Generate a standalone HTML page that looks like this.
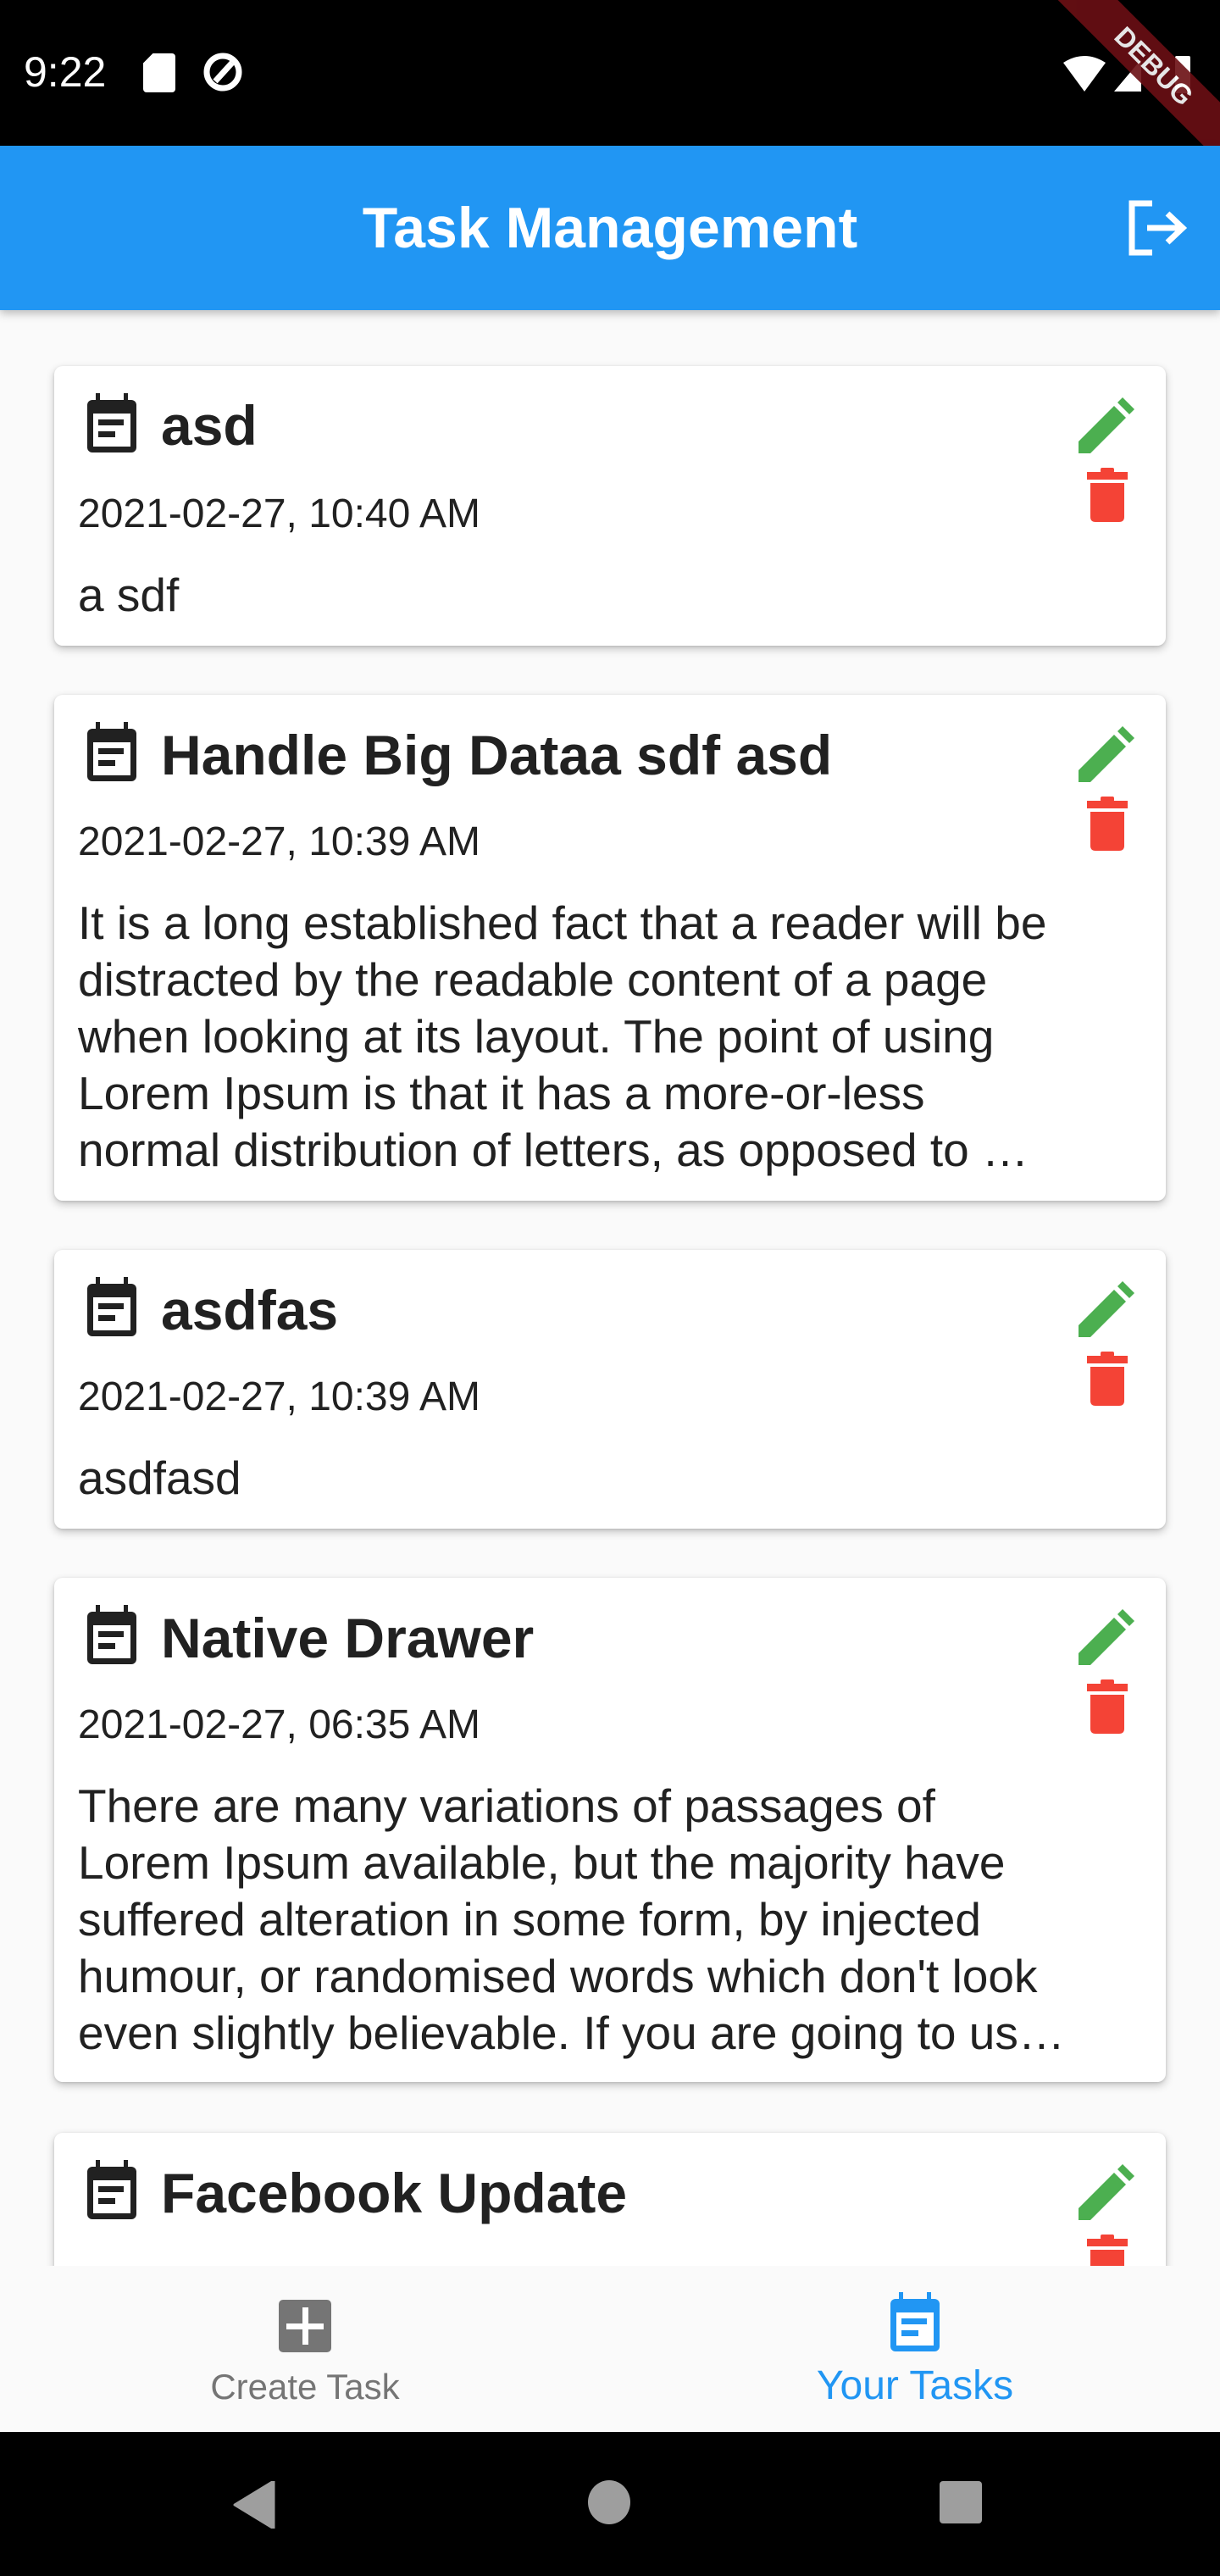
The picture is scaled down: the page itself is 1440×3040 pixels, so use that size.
<!DOCTYPE html>
<html><head><meta charset="utf-8"><style>
*{margin:0;padding:0;box-sizing:border-box}
body{width:1440px;height:3040px;overflow:hidden;background:#fafafa;font-family:"Liberation Sans",Roboto,sans-serif;position:relative;color:#212121}
.status{position:absolute;left:0;top:0;width:1440px;height:172px;background:#000;color:#fff;overflow:hidden}
.appbar{position:absolute;left:0;top:172px;width:1440px;height:194px;background:#2196f3;box-shadow:0 4px 10px rgba(0,0,0,.25);z-index:2}
.appbar h1{position:absolute;left:0;width:1440px;text-align:center;top:52px;font-size:68px;font-weight:bold;color:#fff;line-height:90px}
.card{position:absolute;left:64px;width:1312px;background:#fff;border-radius:10px;box-shadow:0 4px 10px rgba(0,0,0,.22),0 1px 3px rgba(0,0,0,.12)}
.card .ic{position:absolute;left:37px;width:62px;height:70px}
.card .t{position:absolute;left:126px;font-size:66px;font-weight:bold;line-height:80px;white-space:nowrap}
.card .d{position:absolute;left:28px;font-size:48px;line-height:60px;white-space:nowrap}
.card .b{position:absolute;left:28px;font-size:55px;line-height:67px;white-space:nowrap}
.card .ed{position:absolute;left:1209px;width:66px;height:66px}
.card .tr{position:absolute;left:1219px;width:48px;height:64px}
.nav{position:absolute;left:0;top:2674px;width:1440px;height:196px;background:#fafafa;z-index:3}
.sys{position:absolute;left:0;top:2870px;width:1440px;height:170px;background:#000;z-index:3}
</style></head><body>
<div class="status">
 <div style="position:absolute;left:28px;top:54px;font-size:50px;line-height:62px">9:22</div>
 <div style="position:absolute;left:169px;top:63px;width:38px;height:46px;background:#fff;border-radius:4px;clip-path:polygon(30% 0,100% 0,100% 100%,0 100%,0 25%)"></div>
 <svg style="position:absolute;left:238px;top:60px" width="50" height="52" viewBox="0 0 50 52"><circle cx="25" cy="25" r="19" fill="none" stroke="#fff" stroke-width="7"/><path d="M16 36 L36 14" stroke="#fff" stroke-width="7"/></svg>
 <svg style="position:absolute;left:1255px;top:62px" width="160" height="50" viewBox="0 0 160 50"><path d="M0 12 Q25 -4 50 12 L25 46Z" fill="#fff"/><path d="M60 46 L92 8 L92 46Z" fill="#fff"/><rect x="132" y="4" width="18" height="44" rx="2" fill="#fff"/></svg>
 <div style="position:absolute;left:1202px;top:53px;width:320px;height:50px;background:#6b0f14;transform:rotate(45deg);color:#fff;font-weight:bold;font-size:32px;text-align:center;line-height:50px;opacity:.9">DEBUG</div>
</div>
<div class="appbar"><h1>Task Management</h1>
 <svg style="position:absolute;left:1330px;top:64px" width="72" height="66" viewBox="0 0 72 66"><path d="M30 4 H6 V62 H30" fill="none" stroke="#fff" stroke-width="7"/><path d="M24 33 H64 M48 16 L66 33 L48 50" fill="none" stroke="#fff" stroke-width="7"/></svg>
</div>

<svg width="0" height="0" style="position:absolute"><defs>
<symbol id="cal" viewBox="0 0 62 70"><rect x="12" y="0" width="5" height="12" fill="currentColor"/><rect x="45" y="0" width="5" height="12" fill="currentColor"/><rect x="2" y="8" width="58" height="62" rx="6" fill="currentColor"/><rect x="9" y="24" width="44" height="39" fill="#fff"/><rect x="15" y="31" width="30" height="7" fill="currentColor"/><rect x="15" y="45" width="20" height="7" fill="currentColor"/></symbol>
<symbol id="pen" viewBox="0 0 66 66"><path d="M0 66 V52 L42 10 L56 24 L14 66Z" fill="#4caf50"/><path d="M46 6 L52 0 L66 14 L60 20Z" fill="#4caf50"/></symbol>
<symbol id="bin" viewBox="0 0 48 64"><rect x="16" y="0" width="16" height="6" rx="2" fill="#f44336"/><rect x="0" y="5" width="48" height="9" fill="#f44336"/><path d="M4 18 H44 V58 Q44 64 38 64 H10 Q4 64 4 58Z" fill="#f44336"/></symbol>
</defs></svg>

<div class="card" style="top:432px;height:330px">
 <svg class="ic" style="top:32px;color:#212121"><use href="#cal"/></svg>
 <div class="t" style="top:30px">asd</div>
 <div class="d" style="top:145px">2021-02-27, 10:40 AM</div>
 <div class="b" style="top:237px">a sdf</div>
 <svg class="ed" style="top:37px"><use href="#pen"/></svg>
 <svg class="tr" style="top:120px"><use href="#bin"/></svg>
</div>

<div class="card" style="top:820px;height:597px">
 <svg class="ic" style="top:32px;color:#212121"><use href="#cal"/></svg>
 <div class="t" style="top:31px">Handle Big Dataa sdf asd</div>
 <div class="d" style="top:144px">2021-02-27, 10:39 AM</div>
 <div class="b" style="top:236px">It is a long established fact that a reader will be<br>distracted by the readable content of a page<br>when looking at its layout. The point of using<br>Lorem Ipsum is that it has a more-or-less<br>normal distribution of letters, as opposed to …</div>
 <svg class="ed" style="top:37px"><use href="#pen"/></svg>
 <svg class="tr" style="top:120px"><use href="#bin"/></svg>
</div>

<div class="card" style="top:1475px;height:329px">
 <svg class="ic" style="top:32px;color:#212121"><use href="#cal"/></svg>
 <div class="t" style="top:31px">asdfas</div>
 <div class="d" style="top:144px">2021-02-27, 10:39 AM</div>
 <div class="b" style="top:236px">asdfasd</div>
 <svg class="ed" style="top:37px"><use href="#pen"/></svg>
 <svg class="tr" style="top:120px"><use href="#bin"/></svg>
</div>

<div class="card" style="top:1862px;height:595px">
 <svg class="ic" style="top:32px;color:#212121"><use href="#cal"/></svg>
 <div class="t" style="top:31px">Native Drawer</div>
 <div class="d" style="top:144px">2021-02-27, 06:35 AM</div>
 <div class="b" style="top:236px">There are many variations of passages of<br>Lorem Ipsum available, but the majority have<br>suffered alteration in some form, by injected<br>humour, or randomised words which don't look<br>even slightly believable. If you are going to us…</div>
 <svg class="ed" style="top:37px"><use href="#pen"/></svg>
 <svg class="tr" style="top:120px"><use href="#bin"/></svg>
</div>

<div class="card" style="top:2517px;height:400px">
 <svg class="ic" style="top:32px;color:#212121"><use href="#cal"/></svg>
 <div class="t" style="top:31px">Facebook Update</div>
 <svg class="ed" style="top:37px"><use href="#pen"/></svg>
 <svg class="tr" style="top:120px"><use href="#bin"/></svg>
</div>

<div class="nav">
 <div style="position:absolute;left:329px;top:40px;width:62px;height:62px;background:#757575;border-radius:5px"></div>
 <div style="position:absolute;left:357px;top:49px;width:7px;height:44px;background:#fff"></div>
 <div style="position:absolute;left:338px;top:68px;width:44px;height:7px;background:#fff"></div>
 <div style="position:absolute;left:0;width:720px;text-align:center;top:117px;font-size:42px;line-height:52px;color:#757575">Create Task</div>
 <svg style="position:absolute;left:1049px;top:31px;color:#2196f3" width="62" height="70"><use href="#cal"/></svg>
 <div style="position:absolute;left:720px;width:720px;text-align:center;top:114px;font-size:48px;line-height:56px;color:#2196f3">Your Tasks</div>
</div>
<div class="sys">
 <svg style="position:absolute;left:275px;top:58px" width="50" height="56"><path d="M48 0 V56 L2 28Z" fill="#9e9e9e" stroke="#9e9e9e" stroke-width="3" stroke-linejoin="round"/></svg>
 <div style="position:absolute;left:694px;top:57px;width:50px;height:52px;border-radius:50%;background:#9e9e9e"></div>
 <div style="position:absolute;left:1109px;top:58px;width:50px;height:50px;border-radius:4px;background:#9e9e9e"></div>
</div>
</body></html>
